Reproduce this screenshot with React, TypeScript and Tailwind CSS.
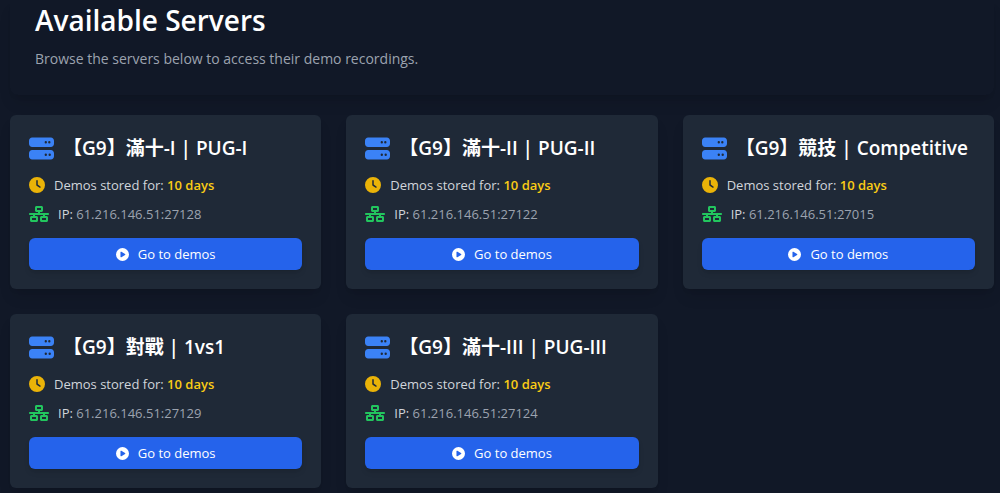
import React from 'react';
import { FaCirclePlay, FaClock, FaNetworkWired, FaServer } from 'react-icons/fa6';

interface Server {
  name: string;
  ip: string;
  days: number;
}

const servers: Server[] = [
  { name: '【G9】滿十-I | PUG-I', ip: '61.216.146.51:27128', days: 10 },
  { name: '【G9】滿十-II | PUG-II', ip: '61.216.146.51:27122', days: 10 },
  { name: '【G9】競技 | Competitive', ip: '61.216.146.51:27015', days: 10 },
  { name: '【G9】對戰 | 1vs1', ip: '61.216.146.51:27129', days: 10 },
  { name: '【G9】滿十-III | PUG-III', ip: '61.216.146.51:27124', days: 10 },
];

const ServerCard = ({ server }: { server: Server }) => (
  <div className="bg-[#1f2937] rounded-md p-[19px] shadow-lg">
    <div className="flex items-center mb-[13px]">
      <FaServer className="h-[25px] w-[25px] shrink-0 text-[#3b82f6]" />
      <h2 className="ml-[9px] text-[19px] leading-7 font-semibold text-white whitespace-nowrap">{server.name}</h2>
    </div>
    <p className="flex items-center mb-[9px] text-[13px] leading-5 text-[#d1d5db]">
      <FaClock className="h-4 w-4 mr-[9px] text-[#eab308]" />
      <span>
        Demos stored for: <span className="font-semibold text-[#facc15]">{server.days} days</span>
      </span>
    </p>
    <p className="flex items-center mb-[14px] text-[13px] leading-5 text-[#d1d5db]">
      <FaNetworkWired className="h-4 w-5 mr-[9px] text-[#22c55e]" />
      <span>
        IP: <span className="text-[#9ca3af]">{server.ip}</span>
      </span>
    </p>
    <button
      type="button"
      className="flex w-full items-center justify-center rounded-md bg-[#2563eb] py-[6px] text-[13px] leading-5 text-white shadow-md hover:bg-[#1d4ed8]"
    >
      <FaCirclePlay className="h-[13px] w-[13px] mr-[9px]" />
      Go to demos
    </button>
  </div>
);

const App = () => {
  return (
    <div className="min-h-screen bg-[#111827] pl-[10px] pr-[6px] pb-[6px] font-['Open_Sans','Noto_Sans_CJK_TC',sans-serif]">
      <header className="rounded-b-lg px-[25px] pb-[25px] mb-5 shadow-lg">
        <h1 className="text-[28px] leading-10 font-semibold text-white">Available Servers</h1>
        <p className="mt-2 text-[14px] leading-[22px] text-[#9ca3af]">
          Browse the servers below to access their demo recordings.
        </p>
      </header>

      <main className="grid grid-cols-3 gap-[25px]">
        {servers.map((server) => (
          <ServerCard key={server.ip} server={server} />
        ))}
      </main>
    </div>
  );
};

export default App;
